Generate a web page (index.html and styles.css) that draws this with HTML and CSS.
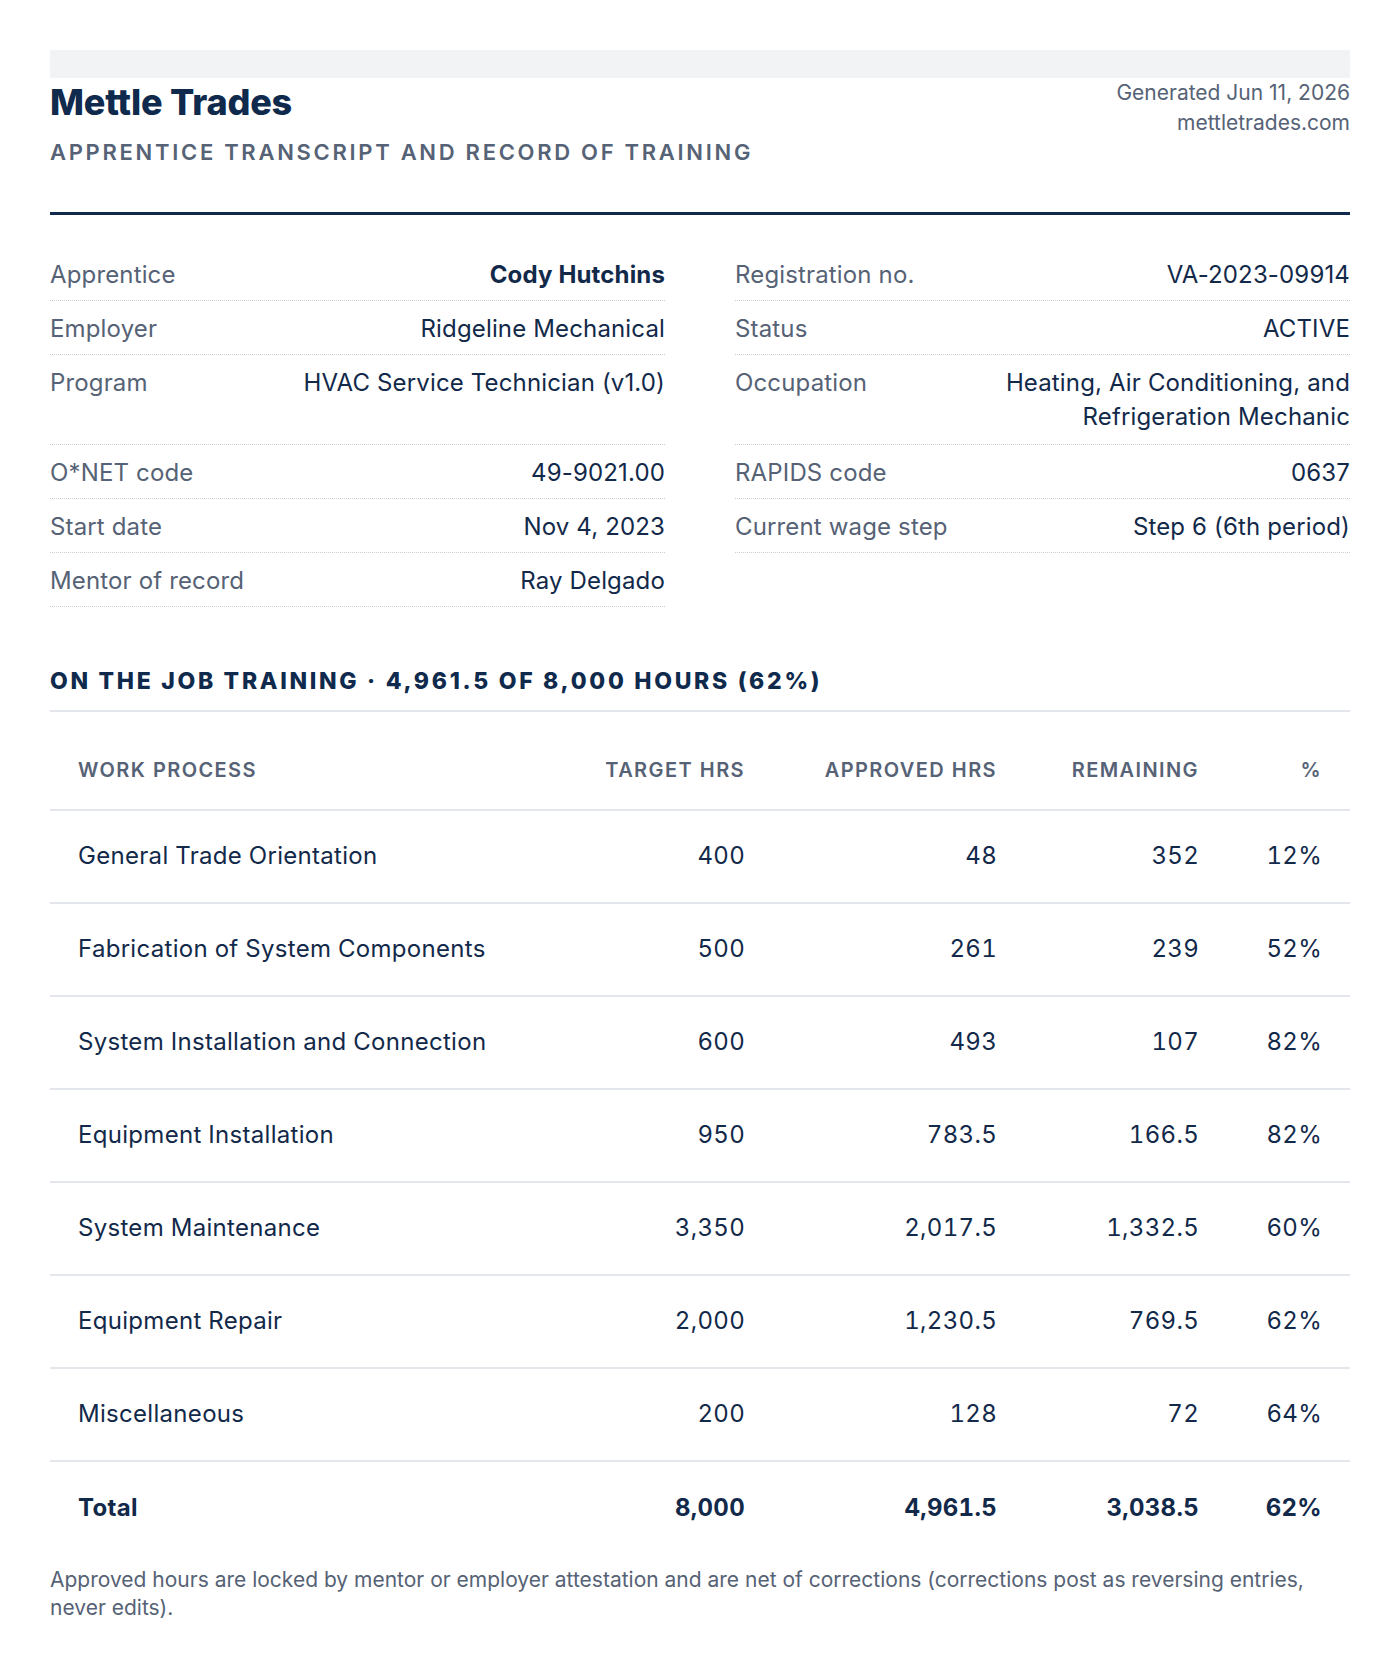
FILE: index.html
```
<!DOCTYPE html>
<html lang="en">
<head>
<meta charset="utf-8">
<title>Mettle Trades — Apprentice Transcript</title>
<link rel="stylesheet" href="styles.css">
</head>
<body>
<div class="page">
  <div class="topbar"></div>
  <header class="head">
    <div class="brand">
      <h1 class="title">Mettle Trades</h1>
      <div class="subtitle">APPRENTICE TRANSCRIPT AND RECORD OF TRAINING</div>
    </div>
    <div class="meta">
      <div>Generated Jun 11, 2026</div>
      <div>mettletrades.com</div>
    </div>
  </header>

  <section class="info">
    <div class="col">
      <div class="row"><span class="lbl">Apprentice</span><span class="val strong">Cody Hutchins</span></div>
      <div class="row"><span class="lbl">Employer</span><span class="val">Ridgeline Mechanical</span></div>
      <div class="row tall"><span class="lbl">Program</span><span class="val">HVAC Service Technician (v1.0)</span></div>
      <div class="row"><span class="lbl">O*NET code</span><span class="val">49-9021.00</span></div>
      <div class="row"><span class="lbl">Start date</span><span class="val">Nov 4, 2023</span></div>
      <div class="row"><span class="lbl">Mentor of record</span><span class="val">Ray Delgado</span></div>
    </div>
    <div class="col">
      <div class="row"><span class="lbl">Registration no.</span><span class="val">VA-2023-09914</span></div>
      <div class="row"><span class="lbl">Status</span><span class="val">ACTIVE</span></div>
      <div class="row tall"><span class="lbl">Occupation</span><span class="val">Heating, Air Conditioning, and<br>Refrigeration Mechanic</span></div>
      <div class="row"><span class="lbl">RAPIDS code</span><span class="val">0637</span></div>
      <div class="row"><span class="lbl">Current wage step</span><span class="val">Step 6 (6th period)</span></div>
    </div>
  </section>

  <h2 class="section">ON THE JOB TRAINING · 4,961.5 OF 8,000 HOURS (62%)</h2>

  <table class="ojt">
    <colgroup>
      <col class="c1"><col class="c2"><col class="c3"><col class="c4"><col class="c5">
    </colgroup>
    <thead>
      <tr><th class="left">WORK PROCESS</th><th>TARGET HRS</th><th>APPROVED HRS</th><th>REMAINING</th><th>%</th></tr>
    </thead>
    <tbody>
      <tr><td class="left">General Trade Orientation</td><td>400</td><td>48</td><td>352</td><td>12%</td></tr>
      <tr><td class="left">Fabrication of System Components</td><td>500</td><td>261</td><td>239</td><td>52%</td></tr>
      <tr><td class="left">System Installation and Connection</td><td>600</td><td>493</td><td>107</td><td>82%</td></tr>
      <tr><td class="left">Equipment Installation</td><td>950</td><td>783.5</td><td>166.5</td><td>82%</td></tr>
      <tr><td class="left">System Maintenance</td><td>3,350</td><td>2,017.5</td><td>1,332.5</td><td>60%</td></tr>
      <tr><td class="left">Equipment Repair</td><td>2,000</td><td>1,230.5</td><td>769.5</td><td>62%</td></tr>
      <tr><td class="left">Miscellaneous</td><td>200</td><td>128</td><td>72</td><td>64%</td></tr>
    </tbody>
    <tfoot>
      <tr><td class="left">Total</td><td>8,000</td><td>4,961.5</td><td>3,038.5</td><td>62%</td></tr>
    </tfoot>
  </table>

  <p class="note">Approved hours are locked by mentor or employer attestation and are net of corrections (corrections post as reversing entries, never edits).</p>
</div>
</body>
</html>
```

FILE: styles.css
```
* { box-sizing: border-box; }
html, body { margin: 0; padding: 0; background: #ffffff; }
body {
  font-family: Inter, "Noto Sans", "Liberation Sans", sans-serif;
  color: #12294a;
}
.page {
  width: 1400px;
  padding: 50px 50px 40px;
}
.topbar {
  height: 28px;
  background: #f2f3f5;
}
.head {
  display: flex;
  justify-content: space-between;
  align-items: flex-start;
  padding-bottom: 46px;
  border-bottom: 3px solid #0f2a4c;
}
.title {
  margin: 0;
  font-family: Inter, "Noto Sans", sans-serif;
  font-weight: 800;
  font-size: 36px;
  line-height: 48px;
  letter-spacing: -0.2px;
  color: #0f2a4c;
}
.subtitle {
  margin-top: 12px;
  font-size: 22px;
  line-height: 28px;
  font-weight: 600;
  letter-spacing: 2.7px;
  color: #566275;
}
.meta {
  text-align: right;
  font-size: 21px;
  line-height: 30px;
  color: #566275;
  margin-top: 0;
}
.info {
  display: grid;
  grid-template-columns: 1fr 1fr;
  column-gap: 70px;
  margin-top: 32px;
}
.row {
  display: flex;
  justify-content: space-between;
  align-items: flex-start;
  gap: 24px;
  padding: 11px 0 8px;
  border-bottom: 1px dotted #c9ced6;
  font-size: 24px;
  line-height: 34px;
  letter-spacing: 0.15px;
}
.row.tall { min-height: 90px; }
.lbl { color: #566275; white-space: nowrap; }
.val { text-align: right; color: #12294a; }
.val.strong { font-weight: 700; }
.section {
  margin: 59px 0 0;
  padding-bottom: 14px;
  border-bottom: 2px solid #e3e6ea;
  font-family: Inter, "Noto Sans", sans-serif;
  font-weight: 800;
  font-size: 23px;
  line-height: 30px;
  letter-spacing: 2.7px;
  color: #0f2a4c;
}
.ojt {
  width: 100%;
  border-collapse: collapse;
  table-layout: fixed;
  margin-top: 15px;
}
.c1 { width: 525px; }
.c2 { width: 198px; }
.c3 { width: 252px; }
.c4 { width: 202px; }
.c5 { width: 123px; }
.ojt th, .ojt td {
  padding: 0 28px;
  text-align: right;
  font-variant-numeric: tabular-nums;
  white-space: nowrap;
}
.ojt .left { text-align: left; }
.ojt th {
  height: 83px;
  padding-top: 4px;
  font-size: 20px;
  font-weight: 600;
  letter-spacing: 1.4px;
  color: #566275;
  border-bottom: 2px solid #e3e6ea;
}
.ojt td {
  height: 93px;
  padding-bottom: 2px;
  font-size: 24px;
  letter-spacing: 0.3px;
  color: #12294a;
}
.ojt tbody td { border-bottom: 2px solid #e3e6ea; }
.ojt tfoot td { font-weight: 650; }
.note {
  margin: 12px 0 0;
  font-size: 21px;
  line-height: 28px;
  color: #566275;
}
```
